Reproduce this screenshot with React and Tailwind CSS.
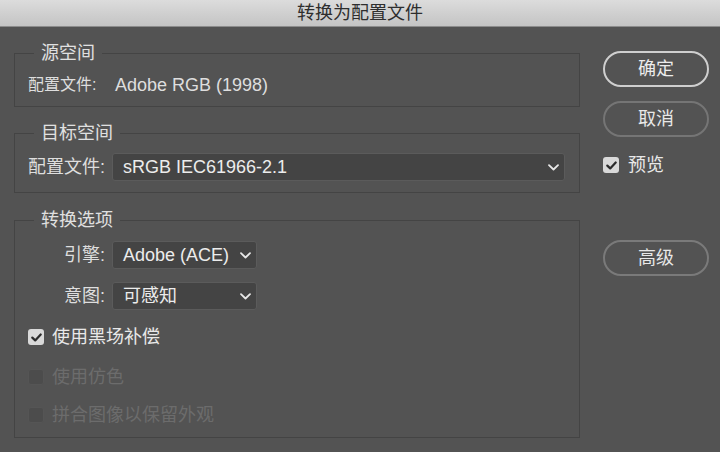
import React from "react";

const FONT = { fontFamily: '"Liberation Sans", "Noto Sans CJK SC", sans-serif' };

function Chevron() {
  return (
    <svg width="11" height="7" viewBox="0 0 11 7" className="shrink-0">
      <path d="M1 1.2 L5.5 5.5 L10 1.2" fill="none" stroke="#e8e8e8" strokeWidth="1.8" strokeLinecap="round" strokeLinejoin="round" />
    </svg>
  );
}

function Select({ value, className }) {
  return (
    <div className={"h-[28px] flex items-center justify-between rounded-[3px] bg-[#444444] border border-[#5b5b5b] pl-[10px] pr-[5px] text-[#ececec] text-[18px] leading-[20px] " + className}>
      <span>{value}</span>
      <Chevron />
    </div>
  );
}

function Check({ checked }) {
  if (checked) {
    return (
      <div className="w-[16px] h-[16px] rounded-[3px] bg-[#d9d9d9] flex items-center justify-center shrink-0">
        <svg width="11" height="9" viewBox="0 0 11 9">
          <path d="M1.3 4.6 L4.2 7.4 L9.7 1.5" fill="none" stroke="#2b2b2b" strokeWidth="2.2" strokeLinecap="round" strokeLinejoin="round" />
        </svg>
      </div>
    );
  }
  return <div className="w-[16px] h-[16px] rounded-[3px] bg-[#4c4c4c] border border-[#555555] shrink-0" />;
}

function Group({ title, className, children }) {
  return (
    <fieldset className={"border border-[#444444] px-[13px] " + className}>
      <legend className="ml-[6px] px-[7px] text-[18px] leading-[20px] text-[#e0e0e0]">{title}</legend>
      {children}
    </fieldset>
  );
}

export default function App() {
  return (
    <div style={FONT} className="w-[720px] h-[452px] bg-[#535353] overflow-hidden flex flex-col">
      <div className="h-[27px] shrink-0 bg-linear-to-b from-[#dcdcdc] to-[#c4c4c4] border-b border-[#8c8c8c] flex items-center justify-center">
        <span className="text-[18px] leading-[20px] text-[#2e2e2e]">转换为配置文件</span>
      </div>
      <div className="flex flex-row">
        <div className="pl-[14px] w-[580px] flex flex-col">
          <Group title="源空间" className="mt-[16px] pb-[11px]">
            <div className="mt-[12px] flex items-center h-[20px] text-[#dedede]">
              <span className="w-[87px] text-[16px]">配置文件:</span>
              <span className="text-[18px] leading-[20px]">Adobe RGB (1998)</span>
            </div>
          </Group>

          <Group title="目标空间" className="mt-[16px] pb-[11px]">
            <div className="mt-[10px] flex items-center">
              <span className="w-[84px] text-[18px] leading-[20px] text-[#dedede]">配置文件:</span>
              <Select value="sRGB IEC61966-2.1" className="w-[453px]" />
            </div>
          </Group>

          <Group title="转换选项" className="mt-[17px] pb-[12px]">
            <div className="mt-[11px] flex items-center">
              <span className="w-[77px] text-right text-[18px] leading-[20px] text-[#dedede]">引擎:</span>
              <Select value="Adobe (ACE)" className="ml-[7px] w-[145px]" />
            </div>
            <div className="mt-[13px] flex items-center">
              <span className="w-[77px] text-right text-[18px] leading-[20px] text-[#dedede]">意图:</span>
              <Select value="可感知" className="ml-[7px] w-[145px]" />
            </div>
            <div className="mt-[17px] flex items-center gap-[8px] h-[20px]">
              <Check checked />
              <span className="text-[18px] leading-[20px] text-[#e8e8e8]">使用黑场补偿</span>
            </div>
            <div className="mt-[20px] flex items-center gap-[8px] h-[20px]">
              <Check />
              <span className="text-[18px] leading-[20px] text-[#6c6c6c]">使用仿色</span>
            </div>
            <div className="mt-[18px] flex items-center gap-[8px] h-[20px]">
              <Check />
              <span className="text-[18px] leading-[20px] text-[#6c6c6c]">拼合图像以保留外观</span>
            </div>
          </Group>
        </div>

        <div className="ml-[23px] w-[106px] pt-[24px] flex flex-col">
          <div className="h-[36px] rounded-full border-2 border-[#cfcfcf] flex items-center justify-center text-[18px] leading-[20px] text-[#ececec]">确定</div>
          <div className="mt-[14px] h-[36px] rounded-full border-2 border-[#757575] flex items-center justify-center text-[18px] leading-[20px] text-[#e8e8e8]">取消</div>
          <div className="mt-[18px] h-[20px] flex items-center gap-[9px]">
            <Check checked />
            <span className="text-[18px] leading-[20px] text-[#e8e8e8]">预览</span>
          </div>
          <div className="mt-[65px] h-[36px] rounded-full border-2 border-[#7a7a7a] flex items-center justify-center text-[18px] leading-[20px] text-[#e8e8e8]">高级</div>
        </div>
      </div>
    </div>
  );
}
